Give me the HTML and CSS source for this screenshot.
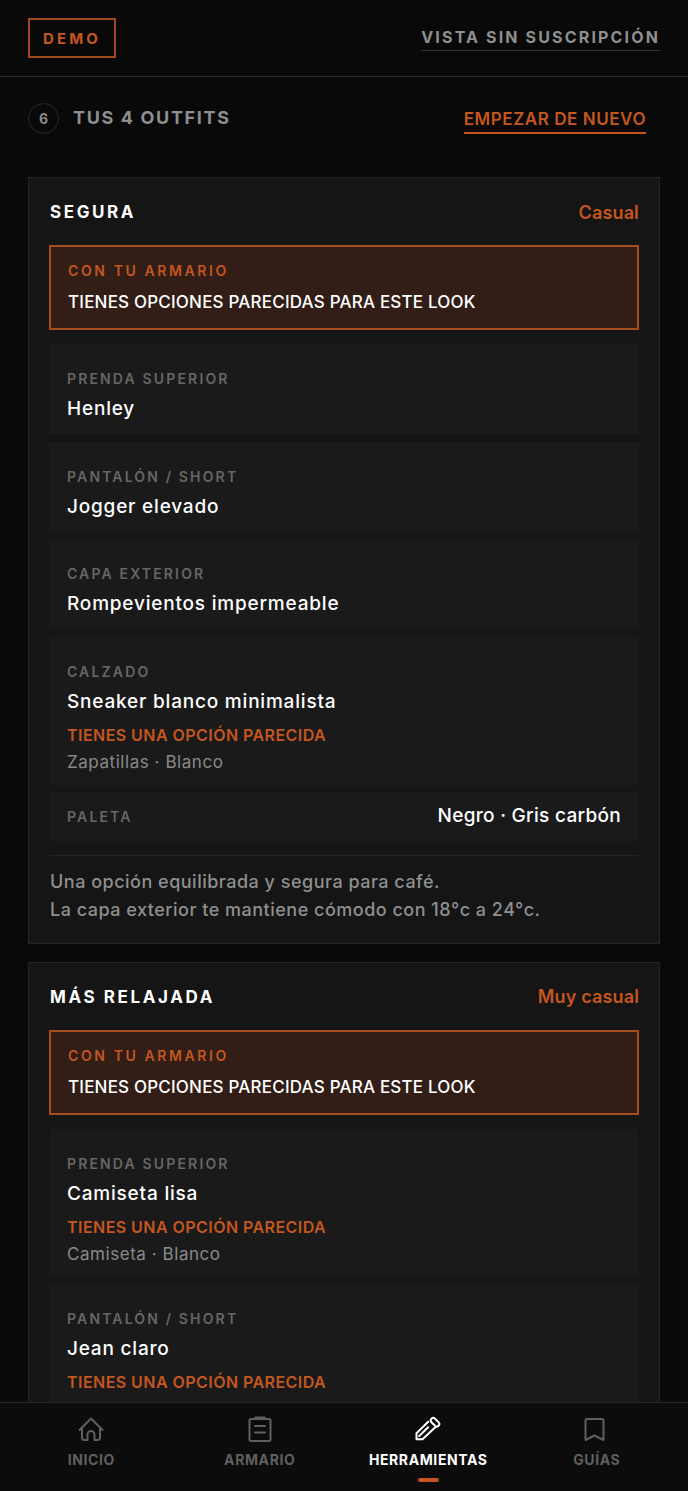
FILE: index.html
```html
<!DOCTYPE html>
<html>
<head>
    <meta charset="utf-8">
    <title>Tus outfits</title>
    <link rel="stylesheet" href="styles.css">
</head>
<body>
    <div class="app">
        <header class="topbar">
            <span class="demo">DEMO</span>
            <a class="plan-link">VISTA SIN SUSCRIPCIÓN</a>
        </header>

        <main class="content">
            <div class="step-row">
                <div class="step-title">
                    <span class="step-num">6</span>
                    <h1>TUS 4 OUTFITS</h1>
                </div>
                <a class="restart">EMPEZAR DE NUEVO</a>
            </div>

            <section class="card">
                <div class="card-head">
                    <h2>SEGURA</h2>
                    <span class="tone">Casual</span>
                </div>
                <div class="closet">
                    <div class="closet-label">CON TU ARMARIO</div>
                    <div class="closet-text">TIENES OPCIONES PARECIDAS PARA ESTE LOOK</div>
                </div>
                <div class="item first">
                    <div class="label">PRENDA SUPERIOR</div>
                    <div class="name">Henley</div>
                </div>
                <div class="item">
                    <div class="label">PANTALÓN / SHORT</div>
                    <div class="name">Jogger elevado</div>
                </div>
                <div class="item">
                    <div class="label">CAPA EXTERIOR</div>
                    <div class="name">Rompevientos impermeable</div>
                </div>
                <div class="item">
                    <div class="label">CALZADO</div>
                    <div class="name">Sneaker blanco minimalista</div>
                    <div class="match">TIENES UNA OPCIÓN PARECIDA</div>
                    <div class="match-detail">Zapatillas · Blanco</div>
                </div>
                <div class="palette">
                    <div class="label">PALETA</div>
                    <div class="name">Negro · Gris carbón</div>
                </div>
                <p class="note">Una opción equilibrada y segura para café.<br>La capa exterior te mantiene cómodo con 18°c a 24°c.</p>
            </section>

            <section class="card">
                <div class="card-head">
                    <h2>MÁS RELAJADA</h2>
                    <span class="tone">Muy casual</span>
                </div>
                <div class="closet">
                    <div class="closet-label">CON TU ARMARIO</div>
                    <div class="closet-text">TIENES OPCIONES PARECIDAS PARA ESTE LOOK</div>
                </div>
                <div class="item first">
                    <div class="label">PRENDA SUPERIOR</div>
                    <div class="name">Camiseta lisa</div>
                    <div class="match">TIENES UNA OPCIÓN PARECIDA</div>
                    <div class="match-detail">Camiseta · Blanco</div>
                </div>
                <div class="item">
                    <div class="label">PANTALÓN / SHORT</div>
                    <div class="name">Jean claro</div>
                    <div class="match">TIENES UNA OPCIÓN PARECIDA</div>
                    <div class="match-detail">Jeans / Denim · Azul claro</div>
                </div>
            </section>
        </main>

        <nav class="tabbar">
            <a class="tab">
                <svg viewBox="0 0 28 28" width="28" height="28"><path d="M2.500 15 14 3.500 25.500 15M5 12.500v10a2.500 2.500 0 0 0 2.500 2.500h3V19.500a3.500 3.500 0 0 1 7 0V25h3a2.500 2.500 0 0 0 2.500-2.500v-10"/></svg>
                <span>INICIO</span>
            </a>
            <a class="tab">
                <svg viewBox="0 0 28 28" width="28" height="28"><rect x="3.500" y="4" width="21" height="22" rx="1.500"/><path class="clip" d="M9.500 3h9"/><path d="M9 11h10M9 17.500h10"/></svg>
                <span>ARMARIO</span>
            </a>
            <a class="tab active">
                <svg viewBox="0 0 28 28" width="28" height="28"><rect x="16" y="4.700" width="10" height="5" rx="2.500" transform="rotate(45 21 7.200)"/><path d="M14.200 6.700 2.500 18.300v6h6l13.300-12.600M5.200 21l9-8.700"/></svg>
                <span>HERRAMIENTAS</span>
            </a>
            <a class="tab">
                <svg viewBox="0 0 28 28" width="28" height="28"><path d="M2.500 5.500a1.500 1.500 0 0 1 1.500-1.500h15a1.500 1.500 0 0 1 1.500 1.500V25l-9-4.500-9 4.500z"/></svg>
                <span>GUÍAS</span>
            </a>
        </nav>
    </div>
</body>
</html>
```

FILE: styles.css
```css
* {
    box-sizing: border-box;
}
html,
body {
    margin: 0;
    padding: 0;
    height: 100%;
    overflow: hidden;
    background-color: #090909;
}
body {
    font-family: "Inter", "Liberation Sans", sans-serif;
    color: #fff;
}
h1,
h2,
p {
    margin: 0;
}
.app {
    position: relative;
    height: 1491px;
    overflow: hidden;
}
.topbar {
    height: 77px;
    padding: 18px 28px 0;
    display: flex;
    justify-content: space-between;
    align-items: flex-start;
    border-bottom: 1px solid #262626;
}
.demo {
    width: 88px;
    height: 40px;
    display: flex;
    align-items: center;
    justify-content: center;
    border: 2px solid #a04a1f;
    color: #c4561f;
    font-size: 15px;
    font-weight: 700;
    letter-spacing: 3.1px;
}
.plan-link {
    margin-top: 9px;
    padding-bottom: 3px;
    border-bottom: 1px solid #333;
    color: #8f8f8f;
    font-size: 16px;
    line-height: 20px;
    font-weight: 700;
    letter-spacing: 2.15px;
}
.content {
    padding: 0 28px;
}
.step-row {
    height: 100px;
    padding-top: 26px;
    display: flex;
    justify-content: space-between;
    align-items: flex-start;
}
.step-title {
    display: flex;
    align-items: center;
    gap: 14px;
}
.step-num {
    width: 31px;
    height: 31px;
    display: flex;
    align-items: center;
    justify-content: center;
    border: 1px solid #262626;
    border-radius: 50%;
    color: #8a8a8a;
    font-size: 14px;
    font-weight: 700;
}
.step-title h1 {
    margin-top: -2px;
    color: #8f8f8f;
    font-size: 18px;
    line-height: 26px;
    font-weight: 700;
    letter-spacing: 1.65px;
}
.restart {
    margin: 4px 14px 0 0;
    padding-bottom: 1px;
    border-bottom: 2px solid #c4561f;
    color: #c4561f;
    font-size: 17px;
    line-height: 24px;
    font-weight: 600;
    letter-spacing: 0.55px;
}
.card {
    margin-bottom: 18px;
    padding: 20px 20px 19px;
    background-color: #151515;
    border: 1px solid #242424;
}
.card-head {
    height: 28px;
    margin-bottom: 19px;
    display: flex;
    justify-content: space-between;
    align-items: center;
}
.card-head h2 {
    padding-left: 1px;
    font-size: 17px;
    font-weight: 700;
    letter-spacing: 2.6px;
}
.tone {
    color: #c4561f;
    font-size: 18px;
    font-weight: 600;
    letter-spacing: 0.15px;
}
.closet {
    height: 85px;
    padding: 15px 17px 0;
    margin-bottom: 14px;
    background-color: #321e16;
    border: 2px solid #a84d1f;
}
.closet-label {
    color: #c4561f;
    font-size: 14px;
    line-height: 18px;
    font-weight: 600;
    letter-spacing: 2.6px;
}
.closet-text {
    margin-top: 11px;
    font-size: 17px;
    line-height: 22px;
    font-weight: 500;
    letter-spacing: 0.2px;
}
.item {
    margin-top: 7.6px;
    padding: 26px 18px 13px;
    background-color: #1a1a1a;
}
.item.first {
    margin-top: 0;
}
.label {
    color: #666;
    font-size: 14px;
    line-height: 18px;
    font-weight: 600;
    letter-spacing: 2.15px;
}
.name {
    margin-top: 9px;
    font-size: 19px;
    line-height: 24px;
    font-weight: 500;
    letter-spacing: 0.8px;
}
.match {
    margin-top: 10px;
    color: #c4561f;
    font-size: 16px;
    line-height: 22px;
    font-weight: 600;
    letter-spacing: 0.45px;
}
.match-detail {
    margin-top: 5.5px;
    margin-bottom: -1.5px;
    color: #8a8a8a;
    font-size: 17px;
    line-height: 22px;
    letter-spacing: 0.55px;
}
.palette {
    height: 48.5px;
    margin-top: 7.6px;
    padding: 0 18px;
    display: flex;
    justify-content: space-between;
    align-items: center;
    background-color: #1a1a1a;
}
.palette .name {
    margin-top: -2px;
    letter-spacing: 0.3px;
}
.note {
    margin-top: 14px;
    padding: 12px 0 0 1px;
    border-top: 1px solid #242424;
    color: #8f8f8f;
    font-size: 18px;
    line-height: 28px;
    font-weight: 500;
    letter-spacing: 0.5px;
}
.tabbar {
    position: absolute;
    left: 0;
    right: 0;
    bottom: 0;
    height: 89px;
    padding: 0 7px;
    display: grid;
    grid-template-columns: repeat(4, 1fr);
    background-color: #0c0c0c;
    border-top: 1px solid #262626;
}
.tab {
    position: relative;
    padding-top: 12px;
    display: flex;
    flex-direction: column;
    align-items: center;
    gap: 8px;
    color: #5f5f5f;
    font-size: 14px;
    line-height: 18px;
    font-weight: 700;
    letter-spacing: 0.6px;
}
.tab svg {
    fill: none;
    stroke: currentColor;
    stroke-width: 2;
    stroke-linejoin: round;
    stroke-linecap: round;
}
.tab svg .clip {
    stroke-width: 3;
}
.tab.active {
    color: #fff;
}
.tab.active::after {
    content: "";
    position: absolute;
    left: 50%;
    bottom: 9px;
    width: 21px;
    height: 4px;
    margin-left: -10px;
    border-radius: 2px;
    background-color: #c4561f;
}
```
